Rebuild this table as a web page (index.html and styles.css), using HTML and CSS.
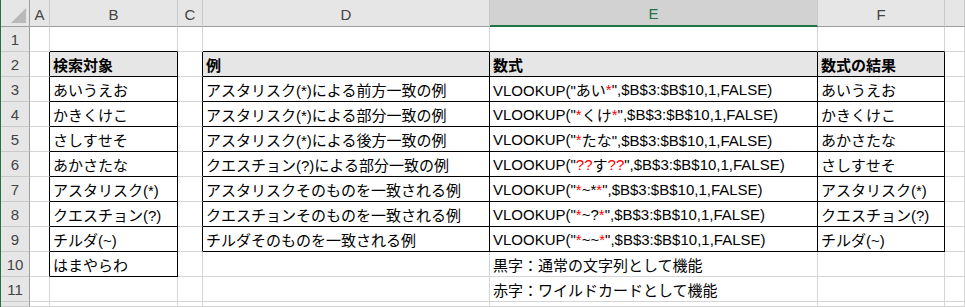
FILE: index.html
```html
<!DOCTYPE html>
<html lang="ja">
<head>
<meta charset="utf-8">
<title>VLOOKUP wildcard</title>
<link rel="stylesheet" href="styles.css">
</head>
<body>
<div class="sheet">
  <!-- column headers -->
  <div class="corner"><span class="tri"></span></div>
  <div class="ch">A</div>
  <div class="ch">B</div>
  <div class="ch">C</div>
  <div class="ch">D</div>
  <div class="ch sel">E</div>
  <div class="ch">F</div>
  <div class="ch"></div>

  <!-- row 1 -->
  <div class="rh">1</div>
  <div class="c"></div>
  <div class="c kb"></div>
  <div class="c"></div>
  <div class="c kb"></div>
  <div class="c kb"></div>
  <div class="c kb"></div>
  <div class="c"></div>

  <!-- row 2 -->
  <div class="rh">2</div>
  <div class="c kr"></div>
  <div class="c k hd">検索対象</div>
  <div class="c kr"></div>
  <div class="c k hd">例</div>
  <div class="c k hd">数式</div>
  <div class="c k hd">数式の結果</div>
  <div class="c"></div>

  <!-- row 3 -->
  <div class="rh">3</div>
  <div class="c kr"></div>
  <div class="c k">あいうえお</div>
  <div class="c kr"></div>
  <div class="c k">アスタリスク(*)による前方一致の例</div>
  <div class="c k">VLOOKUP("あい<span class="r">*</span>",$B$3:$B$10,1,FALSE)</div>
  <div class="c k">あいうえお</div>
  <div class="c"></div>

  <!-- row 4 -->
  <div class="rh">4</div>
  <div class="c kr"></div>
  <div class="c k">かきくけこ</div>
  <div class="c kr"></div>
  <div class="c k">アスタリスク(*)による部分一致の例</div>
  <div class="c k">VLOOKUP("<span class="r">*</span>くけ<span class="r">*</span>",$B$3:$B$10,1,FALSE)</div>
  <div class="c k">かきくけこ</div>
  <div class="c"></div>

  <!-- row 5 -->
  <div class="rh">5</div>
  <div class="c kr"></div>
  <div class="c k">さしすせそ</div>
  <div class="c kr"></div>
  <div class="c k">アスタリスク(*)による後方一致の例</div>
  <div class="c k">VLOOKUP("<span class="r">*</span>たな",$B$3:$B$10,1,FALSE)</div>
  <div class="c k">あかさたな</div>
  <div class="c"></div>

  <!-- row 6 -->
  <div class="rh">6</div>
  <div class="c kr"></div>
  <div class="c k">あかさたな</div>
  <div class="c kr"></div>
  <div class="c k">クエスチョン(?)による部分一致の例</div>
  <div class="c k">VLOOKUP("<span class="r">??</span>す<span class="r">??</span>",$B$3:$B$10,1,FALSE)</div>
  <div class="c k">さしすせそ</div>
  <div class="c"></div>

  <!-- row 7 -->
  <div class="rh">7</div>
  <div class="c kr"></div>
  <div class="c k">アスタリスク(*)</div>
  <div class="c kr"></div>
  <div class="c k">アスタリスクそのものを一致される例</div>
  <div class="c k">VLOOKUP("<span class="r">*</span>~*<span class="r">*</span>",$B$3:$B$10,1,FALSE)</div>
  <div class="c k">アスタリスク(*)</div>
  <div class="c"></div>

  <!-- row 8 -->
  <div class="rh">8</div>
  <div class="c kr"></div>
  <div class="c k">クエスチョン(?)</div>
  <div class="c kr"></div>
  <div class="c k">クエスチョンそのものを一致される例</div>
  <div class="c k">VLOOKUP("<span class="r">*</span>~?<span class="r">*</span>",$B$3:$B$10,1,FALSE)</div>
  <div class="c k">クエスチョン(?)</div>
  <div class="c"></div>

  <!-- row 9 -->
  <div class="rh">9</div>
  <div class="c kr"></div>
  <div class="c k">チルダ(~)</div>
  <div class="c kr"></div>
  <div class="c k">チルダそのものを一致される例</div>
  <div class="c k">VLOOKUP("<span class="r">*</span>~~<span class="r">*</span>",$B$3:$B$10,1,FALSE)</div>
  <div class="c k">チルダ(~)</div>
  <div class="c"></div>

  <!-- row 10 -->
  <div class="rh">10</div>
  <div class="c kr"></div>
  <div class="c k">はまやらわ</div>
  <div class="c"></div>
  <div class="c"></div>
  <div class="c">黒字：通常の文字列として機能</div>
  <div class="c"></div>
  <div class="c"></div>

  <!-- row 11 -->
  <div class="rh">11</div>
  <div class="c"></div>
  <div class="c"></div>
  <div class="c"></div>
  <div class="c"></div>
  <div class="c">赤字：ワイルドカードとして機能</div>
  <div class="c"></div>
  <div class="c"></div>

  <!-- row 12 (partial) -->
  <div class="rh"></div>
  <div class="c"></div>
  <div class="c"></div>
  <div class="c"></div>
  <div class="c"></div>
  <div class="c"></div>
  <div class="c"></div>
  <div class="c"></div>
</div>
</body>
</html>
```

FILE: styles.css
```css
html, body {
  margin: 0;
  padding: 0;
  background: #ffffff;
  overflow: hidden;
}

body {
  width: 965px;
  height: 307px;
  border-left: 1px solid #217346;
  box-sizing: border-box;
}

.sheet {
  display: grid;
  grid-template-columns: 29px 20px 128px 25px 287px 328px 127px 1fr;
  grid-template-rows: 27px repeat(11, 25px) 5px;
  font-family: "Liberation Sans", "Noto Sans CJK JP", sans-serif;
  font-size: 15px;
  color: #000;
  overflow: hidden;
  height: 307px;
}

.sheet > div {
  box-sizing: border-box;
  display: flex;
  align-items: center;
  white-space: nowrap;
  overflow: visible;
  min-width: 0;
  min-height: 0;
}

.corner {
  background: #e6e6e6;
  border-right: 1px solid #9e9e9e;
  border-bottom: 1px solid #9e9e9e;
  position: relative;
}

.tri {
  position: absolute;
  right: 3px;
  bottom: 3px;
  width: 0;
  height: 0;
  border-left: 15px solid transparent;
  border-bottom: 15px solid #b9b9b9;
}

.ch {
  background: #e6e6e6;
  border-right: 1px solid #c9c9c9;
  border-bottom: 1px solid #9e9e9e;
  justify-content: center;
  color: #444;
  font-size: 15px;
  padding-top: 2px;
}

.ch.sel {
  background: #d2d2d2;
  color: #217346;
  border-bottom: 2px solid #217346;
}

.rh {
  background: #e6e6e6;
  border-right: 1px solid #9e9e9e;
  border-bottom: 1px solid #c9c9c9;
  justify-content: center;
  color: #444;
}

.c {
  border-right: 1px solid #d4d4d4;
  border-bottom: 1px solid #d4d4d4;
  padding-left: 3px;
  padding-top: 1px;
}

.c.k {
  border-right-color: #000;
  border-bottom-color: #000;
}

.c.kr {
  border-right-color: #000;
}

.c.kb {
  border-bottom-color: #000;
}

.c.hd {
  background: #e7e6e6;
  font-weight: bold;
}

.r {
  color: #ff0000;
}
```
